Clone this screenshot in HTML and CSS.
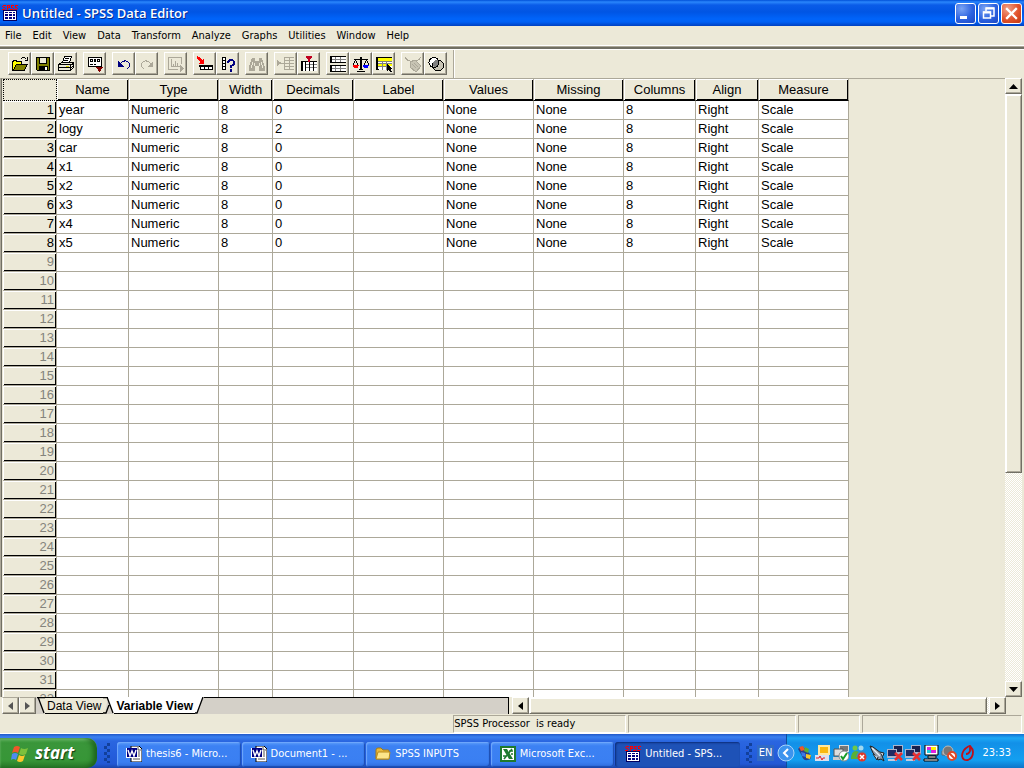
FILE: index.html
```html
<!DOCTYPE html>
<html lang="en">
<head>
<meta charset="utf-8">
<title>Untitled - SPSS Data Editor</title>
<link rel="stylesheet" href="styles.css">
</head>
<body>
<svg class="defs" aria-hidden="true">
  <defs>
    <symbol id="spss" viewBox="0 0 16 16">
      <path d="M1 5h14v11H1z" fill="#000060"/>
      <path d="M2 6h12v9H2z" fill="#fff"/>
      <path d="M3 7h3v1H3zM7 7h3v1H7zM11 7h2v1h-2zM3 9h3v2H3zM7 9h3v2H7zM11 9h2v2h-2zM3 12h3v2H3zM7 12h3v2H7zM11 12h2v2h-2z" fill="#000080"/>
      <path d="M1 0h3v1H1zM0 1h1v1H0zM1 2h2v1H1zM3 3h1v1H3zM0 4h3v1H0zM5 0h3v1H5zM5 1h1v4H5zM7 1h1v1H7zM6 2h2v1H6zM9 0h3v1H9zM9 1h1v1H9zM9 2h2v1H9zM11 3h1v1h-1zM8 4h3v1H8zM13 0h3v1h-3zM13 1h1v1h-1zM13 2h2v1h-2zM15 3h1v1h-1zM12 4h3v1h-3z" fill="#f00"/>
    </symbol>
    <symbol id="word" viewBox="0 0 16 16">
      <path d="M5 0h8l3 3v13H5z" fill="#fff" stroke="#000" stroke-width="1"/>
      <path d="M12 1v3h3M12 6h2M12 8h2M12 10h2M7 13h7" stroke="#555" fill="none"/>
      <path d="M0 2h11v10H0z" fill="#fff"/>
      <path d="M1 2h10v9H1z" fill="#000080"/>
      <path d="M2 4l2 6 2-5 2 5 2-6" stroke="#fff" stroke-width="1.4" fill="none"/>
    </symbol>
    <symbol id="excel" viewBox="0 0 16 16">
      <path d="M0 0h16v16H0z" fill="#1e7a2e"/>
      <path d="M2 2h12v12H2z" fill="#fff"/>
      <path d="M3 3h4l6 10H9z" fill="#1e7a2e"/>
      <path d="M12 3L4 13M9 5h4M11 8h2M3 10h3" stroke="#1e7a2e" stroke-width="1.6"/>
    </symbol>
    <symbol id="folder" viewBox="0 0 16 16">
      <path d="M1 4q0-2 2-2h3l2 2h5q1 0 1 1v8H1z" fill="#e8b93c" stroke="#a77b12"/>
      <path d="M1 13L3 6h12l-1 7z" fill="#fce58a" stroke="#b98b1c"/>
    </symbol>
    <symbol id="netoff" viewBox="0 0 16 17">
      <path d="M6 0h10v9H6z" fill="#aab4cc"/><path d="M7 1h8v6H7z" fill="#18204c"/>
      <path d="M0 4h10v9H0z" fill="#aab4cc"/><path d="M1 5h8v6H1z" fill="#202c64"/>
      <path d="M1 14h9v2H1z" fill="#c4cce0"/>
      <path d="M8 8l7 7M15 8l-7 7" stroke="#e83030" stroke-width="2.5"/>
    </symbol>
  </defs>
</svg>

<header class="titlebar">
  <svg class="ico16"><use href="#spss"/></svg>
  <h1 class="title">Untitled - SPSS Data Editor</h1>
  <button class="winbtn" aria-label="Minimize"><svg width="19" height="19"><path d="M4 12h7v3H4z" fill="#fff"/></svg></button>
  <button class="winbtn" aria-label="Restore"><svg width="19" height="19"><path d="M7 7V4h8v8h-3" fill="none" stroke="#fff" stroke-width="1.5"/><path d="M7 4.500h8" stroke="#fff" stroke-width="2"/><path d="M4.500 8h7v6h-7z" fill="none" stroke="#fff" stroke-width="1.500"/><path d="M4 8.500h8" stroke="#fff" stroke-width="2"/></svg></button>
  <button class="winbtn close" aria-label="Close"><svg width="19" height="19"><path d="M5 5l9 9M14 5l-9 9" stroke="#fff" stroke-width="2.300" stroke-linecap="square"/></svg></button>
</header>

<nav class="menubar">
  <button>File</button><button>Edit</button><button>View</button><button>Data</button><button>Transform</button><button>Analyze</button><button>Graphs</button><button>Utilities</button><button>Window</button><button>Help</button>
</nav>

<main class="client">
  <div class="toolbar" role="toolbar">
    <div class="group">
      <button aria-label="Open"><svg viewBox="0 0 18 16"><path d="M1.500 14.500v-9h1v-1h3v1h5v3" fill="#ff0" stroke="#000"/><path d="M2 14V6h8v3H5z" fill="#ff0"/><path d="M2 14.500l3.500-6h11l-3.500 6z" fill="#808000" stroke="#000"/><path d="M10 3q2-3 5 0M16.500 1v3.500h-3" fill="none" stroke="#000"/></svg></button>
      <button aria-label="Save"><svg viewBox="0 0 18 16"><path d="M2.500 1.500h13v13h-12l-1-1z" fill="#808000" stroke="#000"/><path d="M5.500 1.500h7v6h-7z" fill="#ece9d8" stroke="#000"/><path d="M5 10h9v5H5z" fill="#000"/><path d="M11 11h2v3h-2z" fill="#fff"/></svg></button>
      <button aria-label="Print"><svg viewBox="0 0 18 16"><path d="M5.500 6.500l2-6h7l-2 6z" fill="#fff" stroke="#000"/><path d="M8 2.500h4M7 4.500h4" stroke="#000"/><path d="M1.500 8.500l3-2h12v5l-3 3h-12z" fill="#ece9d8" stroke="#000"/><path d="M2 8.500h11v6M14 9l3-2M14 12l3-3M2 11.500h11" fill="none" stroke="#000"/><path d="M9 10h3v1H9z" fill="#dd0"/></svg></button>
    </div>
    <div class="group">
      <button aria-label="Dialog Recall"><svg viewBox="0 0 18 16"><path d="M2.500 1.500h13v9h-13z" fill="#fff" stroke="#000"/><path d="M4.500 3.500h2v2h-2zM8.500 3.500h1v2h-1zM11.500 3.500h2v2h-2z" fill="none" stroke="#000"/><path d="M4 8.500h3M8 8.500h2" stroke="#000"/><path d="M10 11h7l-3.500 5z" fill="#800000"/></svg></button>
    </div>
    <div class="group">
      <button aria-label="Undo"><svg viewBox="0 0 18 16"><path d="M5 8q4-5 8-2t-1 7" fill="none" stroke="#000080"/><path d="M3 5v6h6z" fill="#000080"/></svg></button>
      <button aria-label="Redo" disabled><svg viewBox="0 0 18 16"><path d="M13 8q-4-5-8-2t1 7" fill="none" stroke="#aca899"/><path d="M15 5v6H9z" fill="#aca899"/></svg></button>
    </div>
    <div class="group">
      <button aria-label="Go to Chart" disabled><svg viewBox="0 0 18 16"><path d="M14.500 8V1.500h-13v12h9" fill="none" stroke="#aca899"/><path d="M4.500 3v7.500h8M6.500 10V8M8.500 10V5M10.500 10V7" stroke="#aca899" fill="none"/><path d="M13 9l4 3.500-4 3.500z" fill="#aca899"/></svg></button>
    </div>
    <div class="group">
      <button aria-label="Go to Case"><svg viewBox="0 0 18 16"><path d="M1 0l2 1 3 3 2-2v6H2l2-2-3-3z" fill="#f00"/><path d="M4.500 10.500h12v3h-12z" stroke="#000" fill="#fff"/><path d="M8.500 10v4M12.500 10v4" stroke="#000"/><path d="M3 9h14v2H3z" fill="#000"/></svg></button>
      <button aria-label="Variables"><svg viewBox="0 0 18 16"><path d="M3.500 1.500h3v12h-3zM3.500 4.500h3M3.500 7.500h3M3.500 10.500h3" fill="#fff" stroke="#000"/><path d="M9 7q0-3 3-3t3 3q0 2-3 3v2M12 13v3" fill="none" stroke="#000080" stroke-width="2"/></svg></button>
    </div>
    <div class="group">
      <button aria-label="Find" disabled><svg viewBox="0 0 18 16"><path d="M4 2h3v3h4V2h3l3 9v4h-6v-5H7v5H1v-4z" fill="#aca899"/><path d="M4.500 6l-1 6M6.500 7v3M13.500 6l1 6M11.500 7v3" stroke="#ece9d8"/></svg></button>
    </div>
    <div class="group">
      <button aria-label="Insert Case" disabled><svg viewBox="0 0 18 16"><path d="M0 4l5 3-5 3z" fill="#aca899"/><path d="M7 1.500h10M7 4.500h10M4 7.500h13M7 10.500h10M7 13.500h10M7.500 1v13M12.500 1v13" fill="none" stroke="#aca899"/></svg></button>
      <button aria-label="Insert Variable"><svg viewBox="0 0 18 16"><path d="M1 5h16v10H1z" fill="#fff"/><path d="M5 8.500h12M5 11.500h12" fill="none" stroke="#808080"/><path d="M1 5.500h16M5.500 5v10M9.500 5v10M13.500 5v10" fill="none" stroke="#000"/><path d="M1 5h2v10H1z" fill="#000"/><path d="M6 0h6v1l-2 3v2H8V4L6 1z" fill="#c00020"/></svg></button>
    </div>
    <div class="group">
      <button aria-label="Split File"><svg viewBox="0 0 18 16"><path d="M1 0h16v6H1zM1 9h16v7H1z" fill="#fff"/><path d="M3 3.500h14M3 12.500h14M6.500 1v5M11.500 1v5M6.500 10v5M11.500 10v5" stroke="#808080"/><path d="M1 .5h16M1 6.500h16M1 9.500h16M1 15.500h16" stroke="#000"/><path d="M1 0h2v7H1zM1 9h2v7H1z"/></svg></button>
      <button aria-label="Weight Cases"><svg viewBox="0 0 18 16"><path d="M2 3.500h14M5 15.500h8M7 13.500h4M3.500 4L1 9M3.500 4L6 9M14.500 4L12 9M14.500 4L17 9" stroke="#000" fill="none"/><path d="M8 1h2v13H8z"/><path d="M1 9h6l-1 3H2z" fill="#f00"/><path d="M11 9h6l-1 3h-4z" fill="#00f"/></svg></button>
      <button aria-label="Select Cases"><svg viewBox="0 0 18 16"><path d="M1 1h16v13H1z" fill="#fff"/><path d="M3 2h14v3H3zM3 8h14v2H3z" fill="#ff0"/><path d="M3 5.500h14M3 7.500h14M3 10.500h9M7.500 5v9M11.500 5v9" stroke="#808080"/><path d="M1 1.500h16M1 13.500h3" stroke="#000"/><path d="M1 1h2v13H1z"/><path d="M12 8v7l2-1 1 2h2l-1-3h2z"/></svg></button>
    </div>
    <div class="group">
      <button aria-label="Value Labels" disabled><svg viewBox="0 0 18 16"><path d="M1 1q3 5 7 4M17 1q-3 5-9 4" fill="none" stroke="#aca899"/><path d="M6 6l5-2 6 6-5 6-6-5z" fill="#c8c4b4" stroke="#aca899"/><path d="M8 8l4 4M10 7l4 4" stroke="#aca899"/></svg></button>
      <button aria-label="Use Sets"><svg viewBox="0 0 18 16"><circle cx="7" cy="6.500" r="5" fill="#fff" stroke="#000"/><circle cx="11" cy="9.500" r="5.500" fill="#c8c4b4" stroke="#000"/><path d="M6 8q0-4 5-4 1 6-4 8z" fill="#808080"/><circle cx="7" cy="6.500" r="5" fill="none" stroke="#000"/></svg></button>
    </div>
    <span class="toolsep"></span>
  </div>

  <div class="sheet">
    <div class="gridwrap">
      <table class="grid">
        <colgroup><col class="c54"><col class="c72"><col class="c90"><col class="c54"><col class="c81"><col class="c90"><col class="c90"><col class="c90"><col class="c72"><col class="c63"><col class="c90"></colgroup>
        <thead><tr><td class="corner"></td><th>Name</th><th>Type</th><th>Width</th><th>Decimals</th><th>Label</th><th>Values</th><th>Missing</th><th>Columns</th><th>Align</th><th>Measure</th></tr></thead>
        <tbody id="rows"></tbody>
      </table>
    </div>
    <div class="vscroll">
      <button class="sbtn" aria-label="Scroll up"><svg width="9" height="5"><path d="M0 5h9L4.500 0z"/></svg></button>
      <div class="vtrack"><div class="thumb vthumb"></div></div>
      <button class="sbtn" aria-label="Scroll down"><svg width="9" height="5"><path d="M0 0h9L4.500 5z"/></svg></button>
    </div>
  </div>

  <div class="bottomrow">
    <div class="tabs">
      <button class="sbtn" aria-label="Previous sheet"><svg width="5" height="8"><path d="M5 0v8L0 4z" fill="#555"/></svg></button>
      <button class="sbtn" aria-label="Next sheet"><svg width="5" height="8"><path d="M0 0v8l5-4z" fill="#555"/></svg></button>
      <svg class="slant" width="9" height="17"><path d="M2 0h7v17z" fill="#ece9d8"/><path d="M1 .5h8M2 0l6 16" stroke="#000" fill="none" stroke-width="1.300"/></svg>
      <button class="tab">Data View</button>
      <svg class="slant" width="11" height="17"><path d="M0 0h5L2 17H0z" fill="#ece9d8"/><path d="M4 0h7v17z" fill="#fff"/><path d="M0 .5h5M4 0l6 16M6 8L3 16H0" stroke="#000" fill="none" stroke-width="1.300"/></svg>
      <button class="tab active">Variable View</button>
      <svg class="slant" width="9" height="17"><path d="M0 0h8L2 17H0z" fill="#fff"/><path d="M8 0L2 16H0" stroke="#000" fill="none" stroke-width="1.300"/></svg>
      <span class="tabfill"></span>
    </div>
    <div class="hscroll">
      <button class="sbtn" aria-label="Scroll left"><svg width="5" height="8"><path d="M5 0v8L0 4z"/></svg></button>
      <div class="htrack"><div class="thumb hthumb"></div></div>
      <button class="sbtn" aria-label="Scroll right"><svg width="5" height="8"><path d="M0 0v8l5-4z"/></svg></button>
    </div>
  </div>

  <footer class="status">
    <span class="pane p1">SPSS Processor&nbsp; is ready</span><span class="pane p2"></span><span class="pane p3"></span><span class="pane p4"></span><span class="pane p5"></span>
  </footer>
</main>

<div class="taskbar">
  <button class="start">
    <svg width="19" height="19" viewBox="0 0 19 19"><path d="M3 3q3-2 6 0L7 9Q4 7 1 9z" fill="#f0572a"/><path d="M10 4q3 2 7 0l-2 6q-3 2-7 0z" fill="#7cc13c"/><path d="M1 10q3-2 6 0l-2 6q-3-2-5 0z" fill="#4e8cf0"/><path d="M8 11q3 2 6 0l-2 6q-3 2-6 0z" fill="#fcc72c"/></svg>
    <span>start</span>
  </button>
  <span class="grip"></span>
  <div class="tasks">
    <button class="task"><svg class="ico16"><use href="#word"/></svg>thesis6 - Micro...</button>
    <button class="task"><svg class="ico16"><use href="#word"/></svg>Document1 - ...</button>
    <button class="task"><svg class="ico16"><use href="#folder"/></svg>SPSS INPUTS</button>
    <button class="task"><svg class="ico16"><use href="#excel"/></svg>Microsoft Exc...</button>
    <button class="task pressed"><svg class="ico16"><use href="#spss"/></svg>Untitled - SPS...</button>
  </div>
  <span class="grip traygrip"></span>
  <button class="lang">EN</button>
  <div class="tray">
    <button class="chev" aria-label="Hide icons"><svg width="18" height="18"><circle cx="9" cy="9" r="8" fill="#3c94ee" stroke="#a8d4fa"/><path d="M11 5L7 9l4 4" stroke="#fff" stroke-width="2" fill="none"/></svg></button>
    <div class="trayicons">
      <svg viewBox="0 0 16 17"><path d="M1 4q3-4 6-1l6 6q3 5-2 6-5 1-6-4z" fill="#28418c"/><path d="M2 2l4-1 2 4-4 1z" fill="#f0572a"/><path d="M8 2l4 2-1 4-4-2z" fill="#5cb030"/><path d="M4 7l4 1 1 4-4-1z" fill="#3c78e8"/><path d="M9 9l5 1-1 4-4-1z" fill="#f8c828"/></svg>
      <svg viewBox="0 0 16 17"><path d="M3 0h12v10H3z" fill="#ffe8a0"/><path d="M5 2h8v6H5z" fill="#f8b810"/><path d="M0 10h14v6H0z" fill="#dce0f0"/><path d="M1 13h3l1-2 2 4 1-2h2" stroke="#e02020" fill="none"/></svg>
      <svg viewBox="0 0 16 17"><path d="M6 0h10v7H6z" fill="#ddd"/><path d="M7 1h8v5H7z" fill="#777"/><path d="M1 4h9v7H1z" fill="#ddd" stroke="#555"/><path d="M0 12h8v3H0z" fill="#ccc"/><circle cx="11" cy="11" r="5" fill="#fff" stroke="#888"/><path d="M8 11l2 3 4-6" fill="none" stroke="#189c28" stroke-width="2"/></svg>
      <svg viewBox="0 0 16 17"><circle cx="4" cy="3" r="2.500" fill="#70c848"/><path d="M0 14q0-8 5-8t4 8z" fill="#58b038"/><circle cx="10" cy="3" r="2.500" fill="#a0d8f0"/><path d="M5 12q1-6 6-6t4 6z" fill="#3e8cc0"/><circle cx="11" cy="12" r="4.500" fill="#e03828"/><path d="M9 10l4 4M13 10l-4 4" stroke="#fff" stroke-width="1.500"/></svg>
      <svg viewBox="0 0 16 17"><path d="M1 1l3 1 8 6 3 8-3-2-3 1-1-3-4-4z" fill="#8c98a8" stroke="#222"/><path d="M3 3l8 8" stroke="#e8eef4" stroke-width="1.500"/><path d="M4 9l4 6 1-3M11 7l4 1-1 3" fill="#cfd8e4" stroke="#222"/></svg>
      <svg><use href="#netoff"/></svg>
      <svg><use href="#netoff"/></svg>
      <svg viewBox="0 0 16 17"><path d="M2 0h13v10H2z" fill="#fff" stroke="#000"/><path d="M4 2h4v3H4z" fill="#e020e0"/><path d="M8 2h5v3H8z" fill="#fff000"/><path d="M4 5h4v3H4z" fill="#20d0e0"/><path d="M8 5h5v3H8z" fill="#e020e0"/><path d="M5 11h8v2H5zM1 14h14v2H1z" fill="#fff" stroke="#000"/></svg>
      <svg viewBox="0 0 16 17"><path d="M1 6h3l5-5v12L4 10H1z" fill="#c8c8c8" stroke="#666"/><circle cx="7" cy="6" r="5" fill="#777" stroke="#bbb"/><circle cx="11" cy="11" r="4" fill="#fff" stroke="#e04828" stroke-width="2"/><path d="M8 8l6 6" stroke="#e04828" stroke-width="2"/></svg>
      <svg viewBox="0 0 16 17"><path d="M10 1Q3 5 3 11q1 5 6 4 5-2 5-8 0-3-3-6v5q-1 3-4 3" fill="none" stroke="#c01018" stroke-width="1.800"/></svg>
    </div>
    <time class="clock">23:33</time>
  </div>
</div>
<script src="rows.js"></script>
</body>
</html>
```
FILE: styles.css
```css
* { box-sizing: border-box; }
body {
  margin: 0; height: 100vh; overflow: hidden;
  display: flex; flex-direction: column;
  background: #ece9d8; color: #000;
  font: 11px/14px "DejaVu Sans Condensed", Roboto, sans-serif;
}
button { font: inherit; color: inherit; margin: 0; padding: 0; border: 0; background: none; }
svg { display: block; flex: none; }
.defs { position: absolute; width: 0; height: 0; }
.ico16 { width: 16px; height: 16px; }

.titlebar {
  height: 26px; flex: none; display: flex; align-items: center; gap: 2px; padding: 0 2px;
  background: linear-gradient(#0050d8 0, #2a86fc 2px, #0a5ce8 5px, #0055e4 12px, #0064fa 19px, #0060f4 22px, #0040c0 26px);
}
.title {
  flex: 1; margin: 0 0 0 2px; color: #fff;
  font: 600 13px/18px "Open Sans", sans-serif; text-shadow: 1px 1px 0 #0a2c90;
}
.winbtn {
  width: 21px; height: 21px; border: 1px solid #fff; border-radius: 3px;
  background: radial-gradient(circle at 30% 25%, #7aa4f4, #2c62e0 55%, #1c48c4);
}
.winbtn.close { background: radial-gradient(circle at 30% 25%, #f0a088, #e2532c 55%, #c03810); }

.menubar { height: 19px; flex: none; display: flex; align-items: center; gap: 11px; padding: 0 5px; }

.client {
  flex: 1; min-height: 0; display: flex; flex-direction: column;
  border-top: 1px solid #fff; border-bottom: 1px solid #fff;
}
.toolbar {
  height: 32px; flex: none; display: flex; align-items: center; gap: 6px; padding: 0 8px;
  border-top: 1px solid #aca899; box-shadow: inset 0 2px #716f64, inset 0 3px #fff;
  padding-top: 2px;
}
.group { display: flex; }
.group button {
  width: 23px; height: 23px; display: flex; align-items: center; justify-content: center;
  border: 1px solid; border-color: #fff #716f64 #716f64 #fff; box-shadow: inset -1px -1px #aca899;
}
.group svg { width: 18px; height: 16px; shape-rendering: crispEdges; }
.toolsep { width: 2px; height: 28px; border-left: 1px solid #aca899; border-right: 1px solid #fff; }

.sheet { flex: 1; min-height: 0; display: flex; padding-right: 2px; border-left: 1px solid #aca899; }
.gridwrap { flex: 1; min-width: 0; overflow: hidden; border-left: 1px solid #716f64; border-top: 1px solid #aca899; padding-left: 1px; }
.grid {
  width: 846px; table-layout: fixed; border-collapse: separate; border-spacing: 0; background: #fff;
  font: 13px/16px "Liberation Sans", Arial, sans-serif;
}
.c54 { width: 54px; } .c63 { width: 63px; } .c72 { width: 72px; } .c81 { width: 81px; } .c90 { width: 90px; }
.grid td, .grid th {
  height: 19px; padding: 0 2px; white-space: nowrap; text-align: left; font-weight: 400;
  border: solid #aca899; border-width: 0 1px 1px 0;
}
.grid thead th, .grid thead td, .grid tbody th {
  background: #ece9d8; box-shadow: inset 1px 1px #fff, inset -1px -1px #000;
}
.grid thead th, .grid thead td { height: 22px; text-align: center; border-bottom-color: #000; }
.grid thead .corner { border: 1px dotted #000; box-shadow: none; }
.grid tbody th { text-align: right; color: #84847c; }
.grid tbody .used th { color: #000; }

.sbtn {
  width: 17px; height: 16px; flex: none; display: flex; align-items: center; justify-content: center;
  background: #ece9d8; border: 1px solid; border-color: #fff #716f64 #716f64 #fff; box-shadow: inset -1px -1px #aca899;
}
.vscroll { width: 17px; display: flex; flex-direction: column; }
.vtrack { flex: 1; background: repeating-conic-gradient(#fff 0 25%, #ece9d8 0 50%) 0 0 / 2px 2px; }
.thumb { background: #ece9d8; border: 1px solid; border-color: #fff #716f64 #716f64 #fff; box-shadow: inset 1px 1px #fff, inset -1px -1px #aca899; }
.vthumb { height: 64.5%; }

.bottomrow { height: 17px; flex: none; display: flex; padding: 0 18px 0 2px; gap: 3px; }
.tabs { flex: 506; display: flex; min-width: 0; background: #d4d0c8; border-right: 1px solid #000; }
.tabs .sbtn { height: 17px; border-top-color: #aca899; }
.tab {
  font: 12px/16px "Liberation Sans", Arial, sans-serif; background: #ece9d8; white-space: nowrap;
  padding: 0 2px; border-top: 1px solid #000; border-bottom: 1px solid #000;
}
.tab.active { font-weight: 700; background: #fff; border-top-color: #fff; }
.tabfill { flex: 1; border-top: 1px solid #000; }
.hscroll { flex: 495; display: flex; min-width: 0; }
.hscroll .sbtn { height: 17px; }
.htrack { flex: 1; background: repeating-conic-gradient(#fff 0 25%, #ece9d8 0 50%) 0 0 / 2px 2px; }
.hthumb { width: calc(100% - 2px); height: 17px; }

.status { height: 19px; flex: none; display: grid; grid-template-columns: 453fr 173fr 169fr 62fr 74fr 85fr; gap: 2px; padding: 1px 2px 1px 0; }
.pane { border: 1px solid; border-color: #aca899 #fff #fff #aca899; line-height: 16px; white-space: nowrap; }
.p1 { grid-column: 2; }

.taskbar {
  height: 34px; flex: none; display: flex; align-items: center; color: #fff;
  background: linear-gradient(#2058c8 0, #3a80f0 3px, #2a66e0 7px, #245edc 20px, #2258d4 30px, #1a44a8 34px);
}
.start {
  width: 97px; height: 30px; margin-top: 4px; display: flex; align-items: center; gap: 5px; padding-left: 11px;
  border-radius: 0 10px 10px 0; background: linear-gradient(#5cb85c 0, #3a963a 5px, #379637 22px, #2a7a2a 30px);
  box-shadow: inset -4px 0 5px #1c641c, inset 0 2px 2px #86cc80;
  font: italic 700 17px/22px "Open Sans", sans-serif; text-shadow: 1px 1px 1px #133c13;
}
.grip {
  width: 6px; height: 20px; margin: 4px 7px 0;
  background: repeating-conic-gradient(#12409c 0 25%, transparent 0 50%) 0 0 / 6px 6px;
}
.traygrip { margin: 4px 5px 0 6px; }
.tasks { flex: 1; display: flex; gap: 1px; min-width: 0; }
.task {
  flex: 1; height: 25px; margin-top: 6px; display: flex; align-items: center; gap: 4px; padding-left: 9px;
  border-radius: 3px; white-space: nowrap; overflow: hidden;
  background: linear-gradient(#5a9cfa 0, #3c81f3 4px, #3a7ff2 20px, #2f6cdc 25px);
  box-shadow: inset -1px -1px 1px #1c4cb0, inset 1px 1px 1px #70a8fc;
}
.task.pressed { background: #1e52b7; box-shadow: inset 1px 1px 2px #0c2c78; padding-left: 10px; }
.lang { margin: 4px 4px 0 0; padding: 0 2px; line-height: 16px; background: #316ac5; }
.tray {
  height: 34px; display: flex; align-items: center; padding: 4px 13px 0 0; margin-left: 8px;
  background: linear-gradient(#1370d0 0, #1ca8f4 4px, #1290e8 9px, #139ff0 26px, #0e74c8 34px);
  border-left: 1px solid #104c9c;
}
.chev { margin-left: -10px; }
.trayicons { display: flex; gap: 2px; margin: 0 7px 0 2px; }
.trayicons svg { width: 16px; height: 17px; }
```
FILE: rows.js
```js
const names = ["year", "logy", "car", "x1", "x2", "x3", "x4", "x5"];
const body = document.getElementById("rows");
for (let i = 0; i < 32; i++) {
  const row = body.insertRow();
  const head = document.createElement("th");
  head.scope = "row";
  head.textContent = i + 1;
  row.append(head);
  const name = names[i];
  const cells = name
    ? [name, "Numeric", "8", name === "logy" ? "2" : "0", "", "None", "None", "8", "Right", "Scale"]
    : Array(10).fill("");
  if (name) row.className = "used";
  for (const text of cells) row.insertCell().textContent = text;
}
```
